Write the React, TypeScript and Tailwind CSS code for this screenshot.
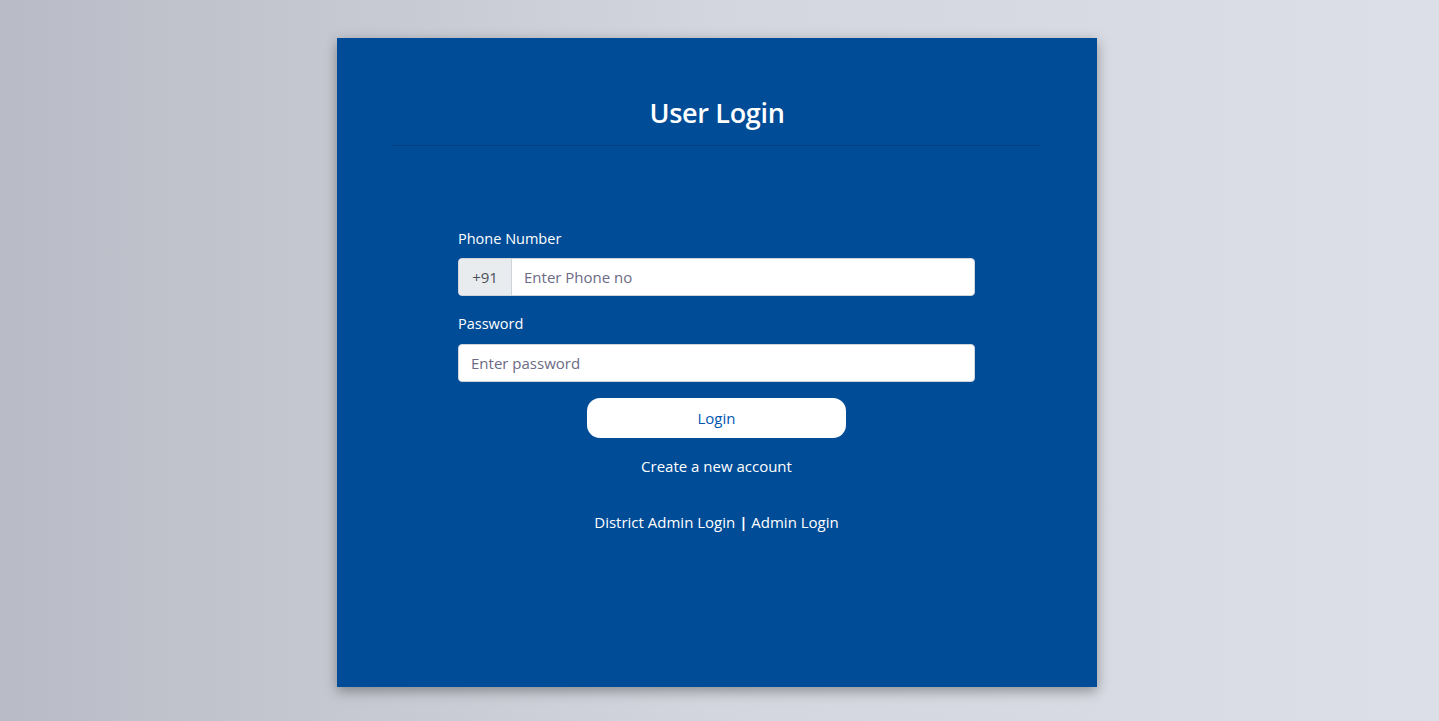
import React from 'react';

const App: React.FC = () => {
  return (
    <div
      className="min-h-[721px] w-full bg-gradient-to-r from-[#b9bcc6] via-[#d3d6de] to-[#dcdfe7] flex justify-center pt-[38px] pb-[34px] pr-[5px]"
      style={{ fontFamily: '"Open Sans", "Noto Sans", sans-serif' }}
    >
      <div className="w-[760px] h-[649px] bg-[#004c97] shadow-[0_4px_12px_rgba(0,0,0,0.35)] flex flex-col items-center">
        <h1 className="mt-[58px] text-[27px] font-semibold text-white leading-[34px] tracking-[-0.3px]">User Login</h1>
        <div className="mt-[15px] w-[648px] h-px bg-[#003f80]" />

        <form className="mt-[83px] w-[517px] mr-px flex flex-col" onSubmit={e => e.preventDefault()}>
          <label className="text-[14.5px] text-white leading-5 mb-[9px]">Phone Number</label>
          <div className="flex h-[38px] rounded border border-[#ced4da] bg-white overflow-hidden">
            <span className="w-[53px] flex items-center justify-center bg-[#e9ecef] border-r border-[#ced4da] text-[15px] text-[#495057]">+91</span>
            <input
              className="flex-1 px-3 text-[15px] text-[#495057] outline-none placeholder:text-[#6c6a85]"
              placeholder="Enter Phone no"
            />
          </div>

          <label className="text-[14.5px] text-white leading-5 mt-[18px] mb-[10px]">Password</label>
          <input
            type="password"
            className="h-[38px] rounded border border-[#ced4da] bg-white px-3 text-[15px] outline-none placeholder:text-[#6c6a85]"
            placeholder="Enter password"
          />

          <button className="self-center mt-4 w-[259px] h-10 rounded-[13px] bg-white text-[#0056b3] text-[15px]">
            Login
          </button>
          <a className="self-center mt-[18px] text-[15px] text-white leading-5 cursor-pointer">Create a new account</a>
          <div className="self-center mt-9 text-[15px] text-white leading-5">
            <a className="cursor-pointer">District Admin Login</a> <b>|</b> <a className="cursor-pointer">Admin Login</a>
          </div>
        </form>
      </div>
    </div>
  );
};

export default App;
